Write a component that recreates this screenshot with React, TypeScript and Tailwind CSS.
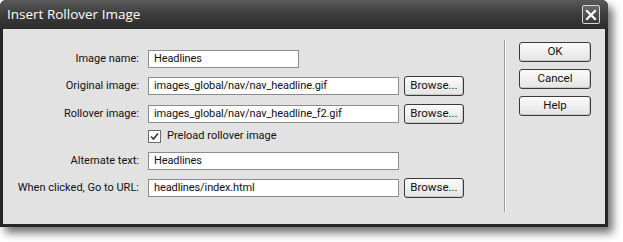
import React from "react";

const font = { fontFamily: 'Roboto, "Liberation Sans", Arial, sans-serif' };

function Btn({ label, w }: { label: string; w: string }) {
  return (
    <div
      className={`${w} h-[20px] flex items-center justify-center rounded-[3px] border border-[#3a3a3a] bg-gradient-to-b from-[#fbfbfb] to-[#e4e4e4] text-[11.5px] text-[#111] shadow-[inset_-1px_-1px_0_#c8c8c8]`}
    >
      {label}
    </div>
  );
}

function Field({ value, w }: { value: string; w: string }) {
  return (
    <div className={`${w} h-[18px] flex items-center border border-[#8c8c8c] bg-white pl-[5px] text-[11px] tracking-[-0.1px] text-[#111] whitespace-nowrap`}>
      {value}
    </div>
  );
}

function Row({
  label,
  children,
  mt,
}: {
  label: string;
  children: React.ReactNode;
  mt: string;
}) {
  return (
    <div className={`${mt} flex h-[20px] items-center`}>
      <div className="w-[136px] text-right text-[11px] text-[#111] whitespace-nowrap">{label}</div>
      <div className="ml-[9px] flex items-center gap-[5px]">{children}</div>
    </div>
  );
}

export default function App() {
  return (
    <div className="w-[623px] h-[242px] bg-white overflow-hidden" style={font}>
      <div className="w-[608px] h-[227px] flex flex-col rounded-t-[6px] bg-[#262626] shadow-[5px_6px_9px_rgba(0,0,0,0.55)]">
        {/* Title bar */}
        <div className="h-[29px] flex items-center justify-between rounded-t-[6px] bg-gradient-to-b from-[#5a5a5a] via-[#3c3c3c] to-[#2c2c2c] pl-[7px] pr-[8px]">
          <span
            className="text-[13.5px] text-white"
            style={{ fontFamily: '"Open Sans", "DejaVu Sans", sans-serif' }}
          >
            Insert Rollover Image
          </span>
          <div className="w-[18px] h-[19px] rounded-[2px] border border-[#d8d8d8] bg-gradient-to-b from-[#6a6a6a] to-[#3a3a3a] flex items-center justify-center">
            <svg width="12" height="12" viewBox="0 0 12 12">
              <path d="M2 2 L10 10 M10 2 L2 10" stroke="#fff" strokeWidth="2.2" strokeLinecap="square" />
            </svg>
          </div>
        </div>
        {/* Body */}
        <div className="flex-1 mx-[3px] mb-[3px] bg-[#e2e2e2] flex">
          <div className="w-[501px] pt-[20px]">
            <Row label="Image name:" mt="mt-0">
              <Field value="Headlines" w="w-[151px]" />
            </Row>
            <Row label="Original image:" mt="mt-[7px]">
              <Field value="images_global/nav/nav_headline.gif" w="w-[251px]" />
              <Btn label="Browse..." w="w-[60px]" />
            </Row>
            <Row label="Rollover image:" mt="mt-[8px]">
              <Field value="images_global/nav/nav_headline_f2.gif" w="w-[251px]" />
              <Btn label="Browse..." w="w-[60px]" />
            </Row>
            <div className="mt-[4px] flex h-[17px] items-center pl-[145px]">
              <div className="w-[13px] h-[13px] border border-[#6a6a6a] bg-white flex items-center justify-center">
                <svg width="9" height="9" viewBox="0 0 9 9">
                  <path d="M1 4.5 L3.5 7 L8 1.5" stroke="#333" strokeWidth="1.6" fill="none" />
                </svg>
              </div>
              <span className="ml-[6px] text-[11px] text-[#111]">Preload rollover image</span>
            </div>
            <Row label="Alternate text:" mt="mt-[6px]">
              <Field value="Headlines" w="w-[251px]" />
            </Row>
            <Row label="When clicked, Go to URL:" mt="mt-[7px]">
              <Field value="headlines/index.html" w="w-[251px]" />
              <Btn label="Browse..." w="w-[60px]" />
            </Row>
          </div>
          <div className="mt-[11px] mb-[12px] w-[1px] bg-[#9a9a9a] border-r border-white box-content" />
          <div className="pl-[13px] pt-[13px] flex flex-col gap-[7px]">
            <Btn label="OK" w="w-[72px]" />
            <Btn label="Cancel" w="w-[72px]" />
            <Btn label="Help" w="w-[72px]" />
          </div>
        </div>
      </div>
    </div>
  );
}
